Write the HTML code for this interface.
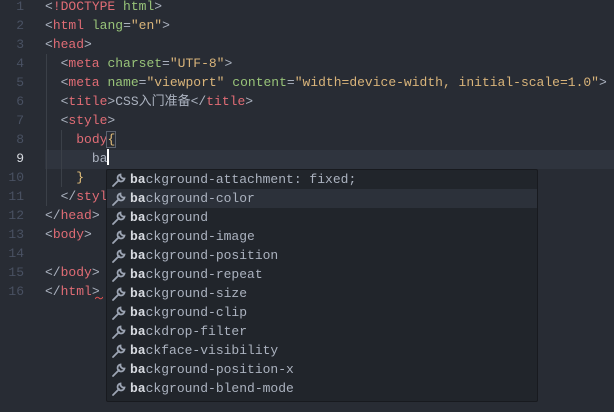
<!DOCTYPE html>
<html><head><style>
body{margin:0;width:614px;height:412px;background:#282c34;overflow:hidden;font-family:"Liberation Mono","Noto Sans CJK SC",monospace;font-size:13px;position:relative}
.ln{position:absolute;left:0;width:24px;text-align:right;color:#495162;line-height:19px}
.cl{position:absolute;left:45px;white-space:pre;color:#abb2bf;line-height:19px}
.t{color:#e06c75}.a{color:#98c379}.s{color:#d9b47a}.p{color:#abb2bf}.b{color:#56b6c2}
.cur{position:absolute;left:45px;right:0;top:150px;height:19px;background:#2f343e}
.g{position:absolute;width:1px;background:#3b4048}
.pop{position:absolute;left:106px;top:169px;width:432px;height:233px;background:#21252b;border:1px solid #181a1f;box-sizing:border-box;border-radius:2px}
.it{position:absolute;left:0;right:0;height:19px;line-height:19px;color:#abb2bf;white-space:pre}
.it svg{position:absolute;left:4px;top:2px}
.it span{position:absolute;left:23px}
.it b{color:#d7dae0}
.sel{background:#2c313a}
</style></head><body>
<div class="cur"></div>
<div class="g" style="left:46px;top:54px;height:152px"></div>
<div class="g" style="left:61px;top:130px;height:57px"></div>
<div class="ln" style="top:-3px">1</div><div class="ln" style="top:16px">2</div><div class="ln" style="top:35px">3</div><div class="ln" style="top:54px">4</div><div class="ln" style="top:73px">5</div><div class="ln" style="top:92px">6</div><div class="ln" style="top:111px">7</div><div class="ln" style="top:130px">8</div><div class="ln" style="top:149px;color:#d7dae0">9</div><div class="ln" style="top:168px">10</div><div class="ln" style="top:187px">11</div><div class="ln" style="top:206px">12</div><div class="ln" style="top:225px">13</div><div class="ln" style="top:244px">14</div><div class="ln" style="top:263px">15</div><div class="ln" style="top:282px">16</div>
<div class="cl" style="top:-3px"><span class="p">&lt;</span><span class="t">!DOCTYPE</span> <span class="a">html</span><span class="p">&gt;</span></div>
<div class="cl" style="top:16px"><span class="p">&lt;</span><span class="t">html</span> <span class="a">lang</span>=<span class="s">"en"</span>&gt;</div>
<div class="cl" style="top:35px">&lt;<span class="t">head</span>&gt;</div>
<div class="cl" style="top:54px">  &lt;<span class="t">meta</span> <span class="a">charset</span>=<span class="s">"UTF-8"</span>&gt;</div>
<div class="cl" style="top:73px">  &lt;<span class="t">meta</span> <span class="a">name</span>=<span class="s">"viewport"</span> <span class="a">content</span>=<span class="s">"width=device-width, initial-scale=1.0"</span>&gt;</div>
<div class="cl" style="top:92px">  &lt;<span class="t">title</span>&gt;CSS入门准备&lt;/<span class="t">title</span>&gt;</div>
<div class="cl" style="top:111px">  &lt;<span class="t">style</span>&gt;</div>
<div class="cl" style="top:130px">    <span class="t">body</span><span style="color:#e5c07b;outline:1px solid #5c6370">{</span></div>
<div class="cl" style="top:149px">      <span style="color:#abb2bf">ba</span><span style="display:inline-block;width:2px;height:16px;background:#fff;vertical-align:-3px"></span></div>
<div class="cl" style="top:168px">    <span style="color:#e5c07b">}</span></div>
<div class="cl" style="top:187px">  &lt;/<span class="t">styl</span></div>
<div class="cl" style="top:206px">&lt;/<span class="t">head</span>&gt;</div>
<div class="cl" style="top:225px">&lt;<span class="t">body</span>&gt;</div>
<div class="cl" style="top:263px">&lt;/<span class="t">body</span>&gt;</div>
<div class="cl" style="top:282px">&lt;/<span class="t">html</span>&gt;</div>
<svg style="position:absolute;left:95px;top:296px" width="8" height="4"><path d="M0 3 Q2 0 4 2 T8 1" stroke="#e05252" fill="none"/></svg>
<div class="pop">
<div class="it" style="top:0"><svg width="16" height="16" viewBox="0 0 16 16"><path d="M2 14 L8 8 M9.5 2.5 A3.5 3.5 0 1 0 13.5 6.5 L11.5 6.5 L9.5 4.5 Z" stroke="#9da5b4" stroke-width="1.8" fill="none" stroke-linecap="round"/></svg><span><b>ba</b>ckground-attachment: fixed;</span></div>
<div class="it sel" style="top:19px"><svg width="16" height="16" viewBox="0 0 16 16"><path d="M2 14 L8 8 M9.5 2.5 A3.5 3.5 0 1 0 13.5 6.5 L11.5 6.5 L9.5 4.5 Z" stroke="#9da5b4" stroke-width="1.8" fill="none" stroke-linecap="round"/></svg><span><b>ba</b>ckground-color</span></div>
<div class="it" style="top:38px"><svg width="16" height="16" viewBox="0 0 16 16"><path d="M2 14 L8 8 M9.5 2.5 A3.5 3.5 0 1 0 13.5 6.5 L11.5 6.5 L9.5 4.5 Z" stroke="#9da5b4" stroke-width="1.8" fill="none" stroke-linecap="round"/></svg><span><b>ba</b>ckground</span></div>
<div class="it" style="top:57px"><svg width="16" height="16" viewBox="0 0 16 16"><path d="M2 14 L8 8 M9.5 2.5 A3.5 3.5 0 1 0 13.5 6.5 L11.5 6.5 L9.5 4.5 Z" stroke="#9da5b4" stroke-width="1.8" fill="none" stroke-linecap="round"/></svg><span><b>ba</b>ckground-image</span></div>
<div class="it" style="top:76px"><svg width="16" height="16" viewBox="0 0 16 16"><path d="M2 14 L8 8 M9.5 2.5 A3.5 3.5 0 1 0 13.5 6.5 L11.5 6.5 L9.5 4.5 Z" stroke="#9da5b4" stroke-width="1.8" fill="none" stroke-linecap="round"/></svg><span><b>ba</b>ckground-position</span></div>
<div class="it" style="top:95px"><svg width="16" height="16" viewBox="0 0 16 16"><path d="M2 14 L8 8 M9.5 2.5 A3.5 3.5 0 1 0 13.5 6.5 L11.5 6.5 L9.5 4.5 Z" stroke="#9da5b4" stroke-width="1.8" fill="none" stroke-linecap="round"/></svg><span><b>ba</b>ckground-repeat</span></div>
<div class="it" style="top:114px"><svg width="16" height="16" viewBox="0 0 16 16"><path d="M2 14 L8 8 M9.5 2.5 A3.5 3.5 0 1 0 13.5 6.5 L11.5 6.5 L9.5 4.5 Z" stroke="#9da5b4" stroke-width="1.8" fill="none" stroke-linecap="round"/></svg><span><b>ba</b>ckground-size</span></div>
<div class="it" style="top:133px"><svg width="16" height="16" viewBox="0 0 16 16"><path d="M2 14 L8 8 M9.5 2.5 A3.5 3.5 0 1 0 13.5 6.5 L11.5 6.5 L9.5 4.5 Z" stroke="#9da5b4" stroke-width="1.8" fill="none" stroke-linecap="round"/></svg><span><b>ba</b>ckground-clip</span></div>
<div class="it" style="top:152px"><svg width="16" height="16" viewBox="0 0 16 16"><path d="M2 14 L8 8 M9.5 2.5 A3.5 3.5 0 1 0 13.5 6.5 L11.5 6.5 L9.5 4.5 Z" stroke="#9da5b4" stroke-width="1.8" fill="none" stroke-linecap="round"/></svg><span><b>ba</b>ckdrop-filter</span></div>
<div class="it" style="top:171px"><svg width="16" height="16" viewBox="0 0 16 16"><path d="M2 14 L8 8 M9.5 2.5 A3.5 3.5 0 1 0 13.5 6.5 L11.5 6.5 L9.5 4.5 Z" stroke="#9da5b4" stroke-width="1.8" fill="none" stroke-linecap="round"/></svg><span><b>ba</b>ckface-visibility</span></div>
<div class="it" style="top:190px"><svg width="16" height="16" viewBox="0 0 16 16"><path d="M2 14 L8 8 M9.5 2.5 A3.5 3.5 0 1 0 13.5 6.5 L11.5 6.5 L9.5 4.5 Z" stroke="#9da5b4" stroke-width="1.8" fill="none" stroke-linecap="round"/></svg><span><b>ba</b>ckground-position-x</span></div>
<div class="it" style="top:209px"><svg width="16" height="16" viewBox="0 0 16 16"><path d="M2 14 L8 8 M9.5 2.5 A3.5 3.5 0 1 0 13.5 6.5 L11.5 6.5 L9.5 4.5 Z" stroke="#9da5b4" stroke-width="1.8" fill="none" stroke-linecap="round"/></svg><span><b>ba</b>ckground-blend-mode</span></div>
</div>
</body></html>
